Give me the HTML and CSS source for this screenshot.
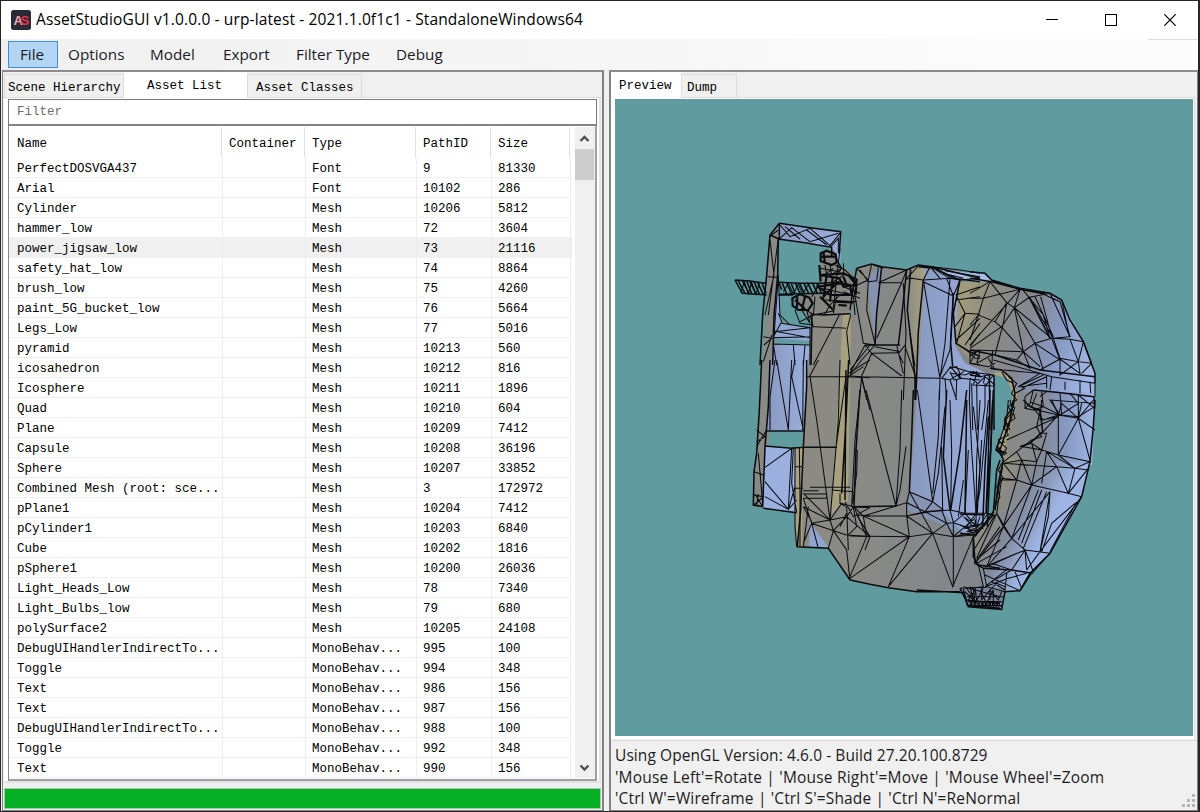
FILE: index.html
```html
<!DOCTYPE html>
<html lang="en">
<head>
<meta charset="utf-8">
<title>AssetStudioGUI</title>
<link rel="stylesheet" href="styles.css">
</head>
<body>
<div class="window">
  <header class="titlebar">
    <svg class="logo" width="20" height="20" viewBox="0 0 20 20"><rect width="20" height="20" rx="2.5" fill="#292a33"/><text class="logo-a" x="2.500" y="15">A</text><text class="logo-s" x="9.500" y="15">S</text></svg>
    <h1 class="title">AssetStudioGUI v1.0.0.0 - urp-latest - 2021.1.0f1c1 - StandaloneWindows64</h1>
    <div class="controls">
      <svg width="12" height="12" viewBox="0 0 12 12"><path d="M0 5.5H12"/></svg>
      <svg width="12" height="12" viewBox="0 0 12 12"><path d="M.5.5h11v11H.5z"/></svg>
      <svg width="12" height="12" viewBox="0 0 12 12"><path class="smooth" d="M.3.3 11.7 11.7M11.7.3.3 11.7"/></svg>
    </div>
  </header>
  <nav class="menu"><span class="item active">File</span><span class="item options">Options</span><span class="item model">Model</span><span class="item export">Export</span><span class="item filter-type">Filter Type</span><span class="item debug">Debug</span></nav>
  <main class="split">
    <section class="pane left">
      <div class="tabs"><span class="tab scene">Scene Hierarchy</span><span class="tab list on">Asset List</span><span class="tab classes">Asset Classes</span></div>
      <div class="page">
        <div class="filter">Filter</div>
        <div class="listbox">
          <div class="table">
            <div class="row head"><span>Name</span><span>Container</span><span>Type</span><span>PathID</span><span>Size</span></div>
            <div class="row"><span>PerfectDOSVGA437</span><span></span><span>Font</span><span>9</span><span>81330</span></div>
            <div class="row"><span>Arial</span><span></span><span>Font</span><span>10102</span><span>286</span></div>
            <div class="row"><span>Cylinder</span><span></span><span>Mesh</span><span>10206</span><span>5812</span></div>
            <div class="row"><span>hammer_low</span><span></span><span>Mesh</span><span>72</span><span>3604</span></div>
            <div class="row selected"><span>power_jigsaw_low</span><span></span><span>Mesh</span><span>73</span><span>21116</span></div>
            <div class="row"><span>safety_hat_low</span><span></span><span>Mesh</span><span>74</span><span>8864</span></div>
            <div class="row"><span>brush_low</span><span></span><span>Mesh</span><span>75</span><span>4260</span></div>
            <div class="row"><span>paint_5G_bucket_low</span><span></span><span>Mesh</span><span>76</span><span>5664</span></div>
            <div class="row"><span>Legs_Low</span><span></span><span>Mesh</span><span>77</span><span>5016</span></div>
            <div class="row"><span>pyramid</span><span></span><span>Mesh</span><span>10213</span><span>560</span></div>
            <div class="row"><span>icosahedron</span><span></span><span>Mesh</span><span>10212</span><span>816</span></div>
            <div class="row"><span>Icosphere</span><span></span><span>Mesh</span><span>10211</span><span>1896</span></div>
            <div class="row"><span>Quad</span><span></span><span>Mesh</span><span>10210</span><span>604</span></div>
            <div class="row"><span>Plane</span><span></span><span>Mesh</span><span>10209</span><span>7412</span></div>
            <div class="row"><span>Capsule</span><span></span><span>Mesh</span><span>10208</span><span>36196</span></div>
            <div class="row"><span>Sphere</span><span></span><span>Mesh</span><span>10207</span><span>33852</span></div>
            <div class="row"><span>Combined Mesh (root: sce...</span><span></span><span>Mesh</span><span>3</span><span>172972</span></div>
            <div class="row"><span>pPlane1</span><span></span><span>Mesh</span><span>10204</span><span>7412</span></div>
            <div class="row"><span>pCylinder1</span><span></span><span>Mesh</span><span>10203</span><span>6840</span></div>
            <div class="row"><span>Cube</span><span></span><span>Mesh</span><span>10202</span><span>1816</span></div>
            <div class="row"><span>pSphere1</span><span></span><span>Mesh</span><span>10200</span><span>26036</span></div>
            <div class="row"><span>Light_Heads_Low</span><span></span><span>Mesh</span><span>78</span><span>7340</span></div>
            <div class="row"><span>Light_Bulbs_low</span><span></span><span>Mesh</span><span>79</span><span>680</span></div>
            <div class="row"><span>polySurface2</span><span></span><span>Mesh</span><span>10205</span><span>24108</span></div>
            <div class="row"><span>DebugUIHandlerIndirectTo...</span><span></span><span>MonoBehav...</span><span>995</span><span>100</span></div>
            <div class="row"><span>Toggle</span><span></span><span>MonoBehav...</span><span>994</span><span>348</span></div>
            <div class="row"><span>Text</span><span></span><span>MonoBehav...</span><span>986</span><span>156</span></div>
            <div class="row"><span>Text</span><span></span><span>MonoBehav...</span><span>987</span><span>156</span></div>
            <div class="row"><span>DebugUIHandlerIndirectTo...</span><span></span><span>MonoBehav...</span><span>988</span><span>100</span></div>
            <div class="row"><span>Toggle</span><span></span><span>MonoBehav...</span><span>992</span><span>348</span></div>
            <div class="row"><span>Text</span><span></span><span>MonoBehav...</span><span>990</span><span>156</span></div>
          </div>
          <div class="scrollbar">
            <svg width="20" height="22" viewBox="0 0 20 22"><path d="M5.5 14 9.5 10l4 4"/></svg>
            <div class="thumb"></div>
            <svg class="down" width="20" height="21" viewBox="0 0 20 21"><path d="M5.5 8.500l4 4 4-4"/></svg>
          </div>
        </div>
      </div>
      <div class="progress"></div>
    </section>
    <section class="pane right">
      <div class="tabs"><span class="tab preview on">Preview</span><span class="tab dump">Dump</span></div>
      <div class="viewport">
        <svg class="mesh" width="578" height="637" viewBox="615 99 578 637">
          <defs>
            <linearGradient id="tan" x1="0" x2="1"><stop offset="0" stop-color="#898a86"/><stop offset="1" stop-color="#aaa37f"/></linearGradient>
            <linearGradient id="hand" gradientUnits="userSpaceOnUse" x1="955" y1="330" x2="1090" y2="370"><stop offset="0" stop-color="#a09b7d"/><stop offset=".2" stop-color="#8c8b83"/><stop offset=".48" stop-color="#858890"/><stop offset=".72" stop-color="#8799c2"/><stop offset="1" stop-color="#9fb5e4"/></linearGradient>
            <linearGradient id="low" gradientUnits="userSpaceOnUse" x1="985" y1="470" x2="1075" y2="515"><stop offset="0" stop-color="#a69f7d"/><stop offset=".3" stop-color="#888984"/><stop offset=".5" stop-color="#828b9f"/><stop offset=".8" stop-color="#9db4e4"/></linearGradient>
            <linearGradient id="mid" gradientUnits="userSpaceOnUse" x1="1005" y1="0" x2="1092" y2="0"><stop offset="0" stop-color="#8a8a83"/><stop offset=".4" stop-color="#85888f"/><stop offset=".7" stop-color="#8799c2"/><stop offset="1" stop-color="#9db3e2"/></linearGradient>
            <linearGradient id="blue" x1="0" x2="1"><stop offset="0" stop-color="#8999bf"/><stop offset="1" stop-color="#9bb0e0"/></linearGradient>
            <linearGradient id="base" gradientUnits="userSpaceOnUse" x1="830" y1="0" x2="980" y2="0"><stop offset="0" stop-color="#8b8b84"/><stop offset="1" stop-color="#82868c"/></linearGradient>
          </defs>
          <!-- shaded faces -->
          <g class="faces">
            <path fill="#898a86" d="M770 235 779 225 776 330 770 430 763 507 753 507 753 495 755 470 761 390Z"/>
            <path fill="url(#blue)" d="M778 223 841 232 840 280 832 280 832 247 778 239Z"/>
            <path fill="#91a5d3" d="M778 275 781 323 810 328 810 341 773 338Z"/>
            <path fill="url(#blue)" d="M773 343 810 345 803 432 766 431Z"/>
            <path fill="#9bb0df" d="M765 446 796 448 799 513 763 508Z"/>
            <path fill="#858780" d="M823 252 834 250 842 268 852 272 858 300 850 315 812 322 801 310 793 302 803 295 818 294Z"/>
            <path fill="url(#base)" d="M812 313 855 313 857 268 872 264 882 267 907 270 918 265 960 270 995 375 987 520 972 538 975 565 990 570 990 591 917 592 888 588 850 580 828 548 797 548 803 430Z"/>
            <path fill="#aaa281" d="M795 448 803 446 802 548 796 548Z"/>
            <path fill="#a8a17f" d="M843 314 851 314 848 500 831 514 840 370Z"/>
            <path fill="#91a4d0" d="M810 522 829 548 809 547Z"/>
            <path fill="url(#tan)" d="M906 270 918 265 926 268 917 378 907 378Z"/>
            <path fill="#8491af" d="M867 280 878 267 883 268 875 342Z"/>
            <path fill="url(#blue)" d="M925 268 961 282 955 345 965 363 994 377 991 520 965 534 910 492 918 378Z"/>
            <path fill="#a7bae5" d="M928 268 970 273 986 273 992 281 982 283 950 278Z"/>
            <path fill="#8693b3" d="M910 492 932 500 965 535 908 510Z"/>
            <path fill="url(#hand)" d="M958 282 991 281 1020 289 1050 293 1062 300 1083 342 1095 373 1095 400 1010 400 1007 377 970 360 956 345Z"/>
            <path fill="url(#low)" d="M1002 448 1092 448 1090 462 1082 497 1050 553 1030 573 1020 591 985 590 973 552 973 538 993 512 1002 460Z"/>
            <path fill="url(#mid)" d="M1013 392 1095 392 1095 400 1092 465 1000 455 1005 420Z"/>
            <path fill="#7c849b" d="M964 588 1006 588 1002 609 968 607Z"/>
            <path fill="#a9a27f" d="M990 374 1003 371 1012 380 1017 394 1015 408 1011 424 1004 450 998 454 996 449 1003 433 1006 418 1012 405 1012 392 1006 378Z"/>
            <path fill="#609c9f" d="M995 375 1007 378 1012 393 1012 407 1005 420 1003 433 997 450 1001 461 998 485 992 512 985 522 988 490 993 420Z"/>
          </g>
          <!-- frame, blade and gearing -->
          <g class="wire" transform="translate(730 215) scale(.33333)">
            <path class="thick" d="M148 25 240 38 332 50 328 115M148 25 120 60 110 180 98 300 90 450M145 72 225 83 305 97 305 125M120 60 148 72 148 28M145 72 143 180 132 300 128 450"/>
            <path d="M150 30 180 65 240 40 300 92 332 52M150 70 185 38 240 80 325 55M165 35 210 72M230 45 290 90M302 96 325 70 325 115M118 65 145 45M120 75 132 180 105 300M145 70 115 300M112 185 145 187 150 300 180 330M145 180 132 365M130 365 155 320 145 295M155 325 240 338 240 368 128 347M132 350 240 338M130 368 240 365M130 387 240 390M190 390 195 450M130 387 140 450M225 390 220 450M240 335 240 450M100 365 125 370 102 390M100 440 126 360M248 335 328 338 348 340M328 300 250 450M362 300 350 350 360 450"/>
            <path class="thick" d="M248 298 280 300 362 296M246 295 243 450M15 195 37 235 110 240M145 240 190 240M15 195 60 198 110 205M145 202 210 205 275 205 340 200M150 238 280 235"/>
            <path class="thick" d="M25 198 45 235M37 197 58 237M50 198 65 236M60 200 78 237M72 199 88 237M83 203 100 238M96 205 108 235M148 205 155 225M157 205 170 237M170 204 185 237M184 206 195 234M196 204 210 235M209 205 222 235M222 205 236 235M235 207 248 235M248 205 262 235M260 205 275 235"/>
            <path d="M33 234 43 200 55 236 65 202 78 238 88 205M160 230 175 205 190 236 205 208 218 238 235 208 250 238 265 210M330 100 310 280M340 145 342 180 310 200M315 150 335 160 300 182"/>
            <path class="heavy" d="M272 115 290 107 317 118 320 142 305 150 272 138ZM272 125 318 124M280 108 285 145M272 180 340 175 372 190 375 210 340 215 328 190ZM290 180 280 250M308 185 300 260M265 215 330 205 360 210 365 240 300 240ZM280 245 325 200M268 150 272 200M187 250 210 238 238 248 248 265 235 285 205 285 188 272ZM195 255 225 282M202 245 200 285M225 245 215 285M310 260 370 262M325 270 350 272M270 245 310 285M340 185 350 210M355 180 375 205M380 190 377 240"/>
            <path d="M195 285 210 325 250 330M215 285 240 325 230 285 250 300 210 320M240 300 250 335M255 245 250 300 310 288M320 240 310 295M283 300 300 270 330 240M370 240 375 300M320 150 345 165 365 185M270 205 245 245M270 160 330 170M340 215 390 235M280 220 360 240M280 255 380 260M310 160 275 185M318 130 335 160 325 175M285 150 290 180M300 150 305 180M340 230 390 250"/>
          </g>
          <!-- upper body -->
          <g class="wire" transform="translate(850 250) scale(.33333)">
            <path class="thick" d="M20 55 65 42 95 50 170 60 205 45 245 50 390 85M20 55 10 110 0 180M95 50 80 190 75 285M170 60 155 200 145 285M182 58 172 180 195 380 195 450M220 90 205 245 197 450M330 90 310 190 318 280 350 300 390 320M310 130 302 280 308 350M45 285 150 285M205 50 255 55 310 85 390 95"/>
            <path d="M245 50 330 60 390 70M20 55 55 90 10 110M55 90 65 42M30 60 55 95 80 92 85 53M70 45 100 55M85 98 155 98 170 60 85 98M55 92 50 180 75 280M10 110 40 280 75 285M155 98 80 265M165 88 185 85 220 90 300 85 330 90 390 85M205 48 170 85M220 90 240 50 300 85M245 55 270 85M265 60 330 90M285 62 390 80M280 70 340 85M220 90 245 240 270 385M220 95 310 138M290 85 310 138 330 90M300 85 285 280 270 385M310 138 300 300 268 385M45 285 0 370M60 285 0 360M75 285 35 330 0 375M45 285 65 310 35 378M65 310 155 378M65 310 150 308M75 290 150 305 165 285M140 285 160 370M140 300 160 340M0 378 35 380 270 385M35 380 50 450M160 100 168 250 160 450M180 250 195 350M165 290 195 375M318 135 390 110M318 150 390 140M318 135 345 190 390 193M315 230 345 190 320 280M318 270 390 205M345 285 390 220M360 290 390 250M360 305 360 340 390 345M370 310 390 300M350 300 375 325 390 325"/>
            <path d="M300 355 320 350 330 370 300 390 275 385 302 350 330 385 390 390M300 370 345 375 370 365 390 380M310 360 335 385 312 390 300 365M270 385 268 450M285 385 290 450M300 390 320 450M320 390 318 450M360 385 358 450M308 350 390 375M325 380 345 360"/>
          </g>
          <!-- handle, top half -->
          <g class="wire" transform="translate(970 260) scale(.33333)">
            <path class="thick" d="M0 35 45 40 65 60 150 85 240 100 275 120 300 180 340 245 375 340 375 370M0 55 65 65 150 88 225 102M178 112 240 235M0 270 75 285 210 330 375 350M372 410 374 445M60 325 95 330 125 355 135 400 130 440 105 475 103 510M190 390 260 397 372 410"/>
            <path d="M60 65 40 115 25 165 0 240M60 65 0 100M60 65 110 128 133 143 178 112 240 100 300 230 250 235 178 112M150 88 133 143 160 275 195 250 245 235 300 238 340 245M150 88 40 115 0 115M150 88 0 255M110 128 75 185 25 165 0 195M110 128 100 190 75 285M133 143 95 200 0 265M75 185 98 205 160 275M133 143 195 250 270 300 245 235M133 143 245 235M195 110 250 230M212 110 245 230M225 105 270 125 300 230M275 120 298 230M155 85 220 165 240 235M250 235 270 295 325 305 300 238M340 245 325 305 365 310M340 245 365 310 335 340M270 297 210 330M325 305 270 345 270 297 330 340 325 305M195 250 220 330M160 275 140 300 180 325 160 275M160 275 210 320M160 275 0 270M98 205 160 275M75 285 140 300M0 290 20 272 0 310M20 310 30 275M20 310 65 285M65 325 68 270M0 310 55 320 75 310M55 295 75 330M70 300 210 340 245 350 375 370M100 330 210 340 145 380 220 345M145 380 230 370M155 385 230 350 230 385"/>
            <path d="M375 370 375 410M285 365 285 390M330 360 330 400M360 365 362 400M245 350 240 390M190 390 165 410 165 445 190 450 220 440M190 390 180 430 165 445M200 400 185 440M210 410 230 395M215 395 220 440 270 465 325 470 374 440M220 440 180 425M270 400 275 465M325 405 325 470M270 465 240 420 372 430M270 465 325 430 300 400M325 405 374 445M215 420 210 480M190 445 220 480M135 400 165 385M115 350 140 370 125 400 140 420 115 440 125 460 105 480 120 510M95 335 110 360 130 370M115 440 130 430M0 345 20 335 30 350 55 345 70 345M0 355 25 370 45 350 75 375M0 335 70 345 45 380M20 340 10 375 70 378M45 350 40 370"/>
            <path class="thick" d="M58 345 60 510M72 345 72 510M0 345 35 350"/>
            <path d="M5 370 8 510M20 370 22 510M45 370 45 440 35 510"/>
          </g>
          <!-- foot plates -->
          <g class="wire" transform="translate(740 360) scale(.33333)">
            <path class="thick" d="M65 0 58 150 50 280 42 335 40 435 70 440M90 0 85 140 75 260 68 440M80 213 190 213M75 258 155 265 190 262 290 262M70 445 170 458M200 0 200 80 190 262 182 450 172 560 265 565 330 660M318 30 315 420M326 0 318 180 305 400"/>
            <path d="M105 0 90 110 90 210M110 0 145 210M155 0 145 210M165 0 155 50 190 210M190 0 188 210M75 322 155 265 145 448 75 365M75 410 145 448 165 380M145 448 170 420M160 262 155 370 170 458M165 262 165 500 170 560M178 262 180 400 180 560M50 210 75 230 50 245M50 260 78 213M55 280 68 430M42 335 70 345M40 405 70 410 42 435M45 402 68 440M55 402 50 438M165 320 190 320M165 385 190 385M200 50 318 50 390 53M210 50 230 180 270 480M235 0 208 50M300 0 295 180 270 480M318 50 288 262 270 480 305 430 340 440M210 382 330 382M190 392 235 392M190 402 258 402M190 415 260 415 260 400M275 390 340 395M190 400 270 480M190 415 215 490 280 512 270 480M190 440 215 485M215 490 190 550M215 490 235 565M205 440 190 560M270 480 190 440M215 490 270 480 320 470 340 440 390 443M280 512 320 470 390 530M280 512 265 565M280 512 320 525 390 530M320 440 325 570M320 460 300 500M340 440 350 500 325 525M350 465 390 530 375 570M315 425 340 470 390 443M350 465 390 468M300 400 300 430 320 440M280 512 320 570 330 660M325 40 390 0M325 50 370 20M365 50 345 240 335 440M365 55 390 150M352 270 350 340 338 430"/>
          </g>
          <!-- lower body -->
          <g class="wire" transform="translate(850 390) scale(.33333)">
            <path class="thick" d="M30 0 18 180 12 350M190 0 185 140 178 305M350 0 330 180 302 360M420 0 415 200 408 370M0 570 60 583 115 593 200 605 330 605M200 600 340 608M340 598 352 645 450 655M345 630 450 640M290 0 280 200 300 360M430 0 422 180 408 370M12 350 140 348"/>
            <path d="M48 0 138 348M155 0 150 180 138 348M168 170 150 300 138 348M202 0 225 165 248 335M268 0 265 140 248 310M285 50 265 250 248 335M275 170 278 360M300 30 305 180 302 360M358 30 365 180 378 370M355 180 345 370M395 150 382 370M415 30 390 300 378 370M340 270 325 380M12 350 40 378 170 378 240 365 300 360 345 370 408 370M40 378 138 348 170 338 178 305 248 335 225 365 170 378 170 338 225 365M178 305 248 430 290 400 225 365M178 440 40 378 50 440 12 350M170 378 178 440 248 430 310 440 370 435M0 438 178 440 0 565M170 378 248 430 115 590 178 440M50 440 0 560M248 430 308 590 370 440M310 440 310 590M275 360 290 400 310 398 300 360 345 370 310 398 310 440 290 400M310 398 345 410 375 385M310 440 345 410 370 430 400 405M248 335 280 360 225 365M345 370 380 410 390 380M345 410 410 400 380 430M350 425 400 415M345 385 370 410M310 440 380 425"/>
            <path class="thick" d="M408 370 430 375 370 440M370 440 370 500 385 525 450 535M450 145 438 180 450 190M450 210 440 240 430 370"/>
            <path d="M385 525 400 590 360 595M390 500 450 450M380 510 450 410M350 595 380 640M370 595 375 640 400 595M390 600 410 640 430 600M340 590 450 620M355 620 380 610"/>
          </g>
          <!-- handle, bottom half -->
          <g class="wire" transform="translate(960 400) scale(.33333)">
            <path class="thick" d="M405 0 400 80 390 185 365 290 270 460 210 520 180 572 135 575 125 628 25 620 15 595 0 565M40 410 45 490 70 505 155 510 220 520M100 335 45 410M115 140 130 180 115 250 105 330M25 605 125 605M30 617 125 617M160 0 150 60 120 150M190 0 210 20 240 30 248 95 210 130 180 140M115 150 140 160"/>
            <path d="M145 0 140 60 110 145 135 165M150 0 165 55 130 80 145 105 115 120 140 145M165 20 140 100M240 35 230 80 245 110 215 120 190 140M240 100 260 100 245 150 295 165 390 185 345 205 290 200 125 190M250 95 295 45 355 55 405 90M295 45 250 60M275 0 295 45 305 10 355 55 400 0M295 45 295 165 355 55 390 180M355 55 365 10M230 30 295 45M245 60 295 50 140 120M205 15 230 30M190 140 245 150 230 185 185 180 170 155 190 140M170 155 125 190M185 180 130 190 170 240 185 180 215 255 290 200 325 280 345 205M230 185 215 255 170 240 125 235M245 150 215 130 230 185M260 155 245 250M290 200 260 155 345 205 295 165M325 280 385 205M345 205 385 210M215 255 325 280 365 290M170 240 130 380M215 255 130 380M215 255 155 415 130 380M270 275 155 415M235 270 175 420M245 270 185 430M260 275 190 445M270 275 240 455M270 275 265 350 240 455M365 290 240 455M345 310 275 370 245 455M350 305 270 455M125 235 110 340 130 380M125 240 170 240M110 340 155 415 195 450 270 460M130 380 45 490M110 340 50 475M105 345 45 445M130 380 80 500 195 450 200 510M155 415 85 495M195 450 155 510 95 490M195 450 220 515 270 460M240 455 200 510M50 490 140 440M75 500 195 450M145 505 75 560M70 505 80 560 135 575M75 525 180 572 210 520M155 510 95 545 135 570 140 520M75 560 145 535 200 520M165 515 185 565 215 520M0 565 80 562M15 575 40 600 30 560M45 565 50 600M65 560 65 600M65 600 90 570 90 600M90 570 115 600 125 575M135 560 110 550 90 570M25 600 45 570M100 570 100 605M20 590 130 590"/>
            <path class="thick" d="M20 0 15 340M98 0 90 200 82 380M85 50 75 200 68 380M0 342 75 345M0 400 45 405"/>
            <path d="M40 20 60 200 48 350M60 0 50 180 48 380M10 350 55 380 20 395M45 345 15 385 60 375 80 345M0 375 50 395 45 360M115 130 135 125M110 145 125 170 140 145M130 80 150 75M125 190 115 210 130 235 110 260 120 290 105 320M128 200 105 325"/>
            <path class="heavy" d="M30 611 120 612" stroke-dasharray="8 3"/>
          </g>
        </svg>
      </div>
      <footer class="status"><p class="s1">Using OpenGL Version: 4.6.0 - Build 27.20.100.8729</p><p class="s2">'Mouse Left'=Rotate | 'Mouse Right'=Move | 'Mouse Wheel'=Zoom</p><p class="s3">'Ctrl W'=Wireframe | 'Ctrl S'=Shade | 'Ctrl N'=ReNormal</p>
        <svg class="grip" width="13" height="13" viewBox="0 0 13 13"><path d="M10 0h3v3h-3zM5 5h3v3H5zM10 5h3v3h-3zM0 10h3v3H0zM5 10h3v3H5zM10 10h3v3h-3z"/></svg>
      </footer>
    </section>
  </main>
</div>
</body>
</html>
```

FILE: styles.css
```css
* { box-sizing: border-box; }
body { margin: 0; background: #28252a; font-family: "Open Sans", "Noto Sans", sans-serif; color: #111; }
.window { width: 1199px; height: 812px; border: 1px solid #28252a; background: #f0f0f0; display: flex; flex-direction: column; overflow: hidden; }
.titlebar { height: 38px; flex: none; background: #fff; display: flex; align-items: center; padding: 0 0 1px 10px; }
.logo text { font: bold 13px "Liberation Sans", sans-serif; }
.logo-a { fill: #f3a3ad; }
.logo-s { fill: #ee2f4c; }
.title { margin: 0 0 1px 5px; font-weight: 400; font-size: 15.5px; letter-spacing: .13px; line-height: 20px; white-space: nowrap; color: #000; }
.controls { margin-left: auto; display: flex; gap: 47px; padding: 1px 22px 0 0; height: 13px; }
.controls path { fill: none; stroke: #000; stroke-width: 1; shape-rendering: crispEdges; }
.controls path.smooth { shape-rendering: auto; stroke-width: 1.2; }
.menu { height: 31px; flex: none; display: flex; align-items: center; padding-left: 7px; background: linear-gradient(#dedede, #dedede) right top / 50px 1px no-repeat, linear-gradient(90deg, #f0f0f0, #fbfbfb 85%, #fcfcfc); font-size: 15.3px; color: #1c1c28; }
.item { height: 27px; line-height: 26px; white-space: nowrap; }
.active { width: 50px; text-align: center; background: #b1d5f2; border: 1px solid #3d8fd6; line-height: 25px; padding-right: 2px; }
.options { padding-left: 10px; width: 92px; }
.model { width: 73px; }
.export { width: 73px; }
.filter-type { width: 100px; }
.split { flex: 1; min-height: 0; display: flex; gap: 5px; padding-left: 1px; }
.pane { border: 1px solid #828282; border-top: 2px solid #8c8c8c; background: #f0f0f0; display: flex; flex-direction: column; height: 741px; }
.left { width: 602px; border-right-width: 2px; padding-left: 1px; }
.right { width: 589px; border-left-width: 2px; }
.tabs, .filter, .table { font-family: "Liberation Mono", monospace; font-size: 12.5px; color: #000; }
.tabs { height: 26px; flex: none; display: flex; align-items: flex-end; border-bottom: 1px solid #dedede; }
.tab { height: 23px; border: 1px solid #dcdcdc; border-bottom: 0; background: #f0f0f0; line-height: 27px; white-space: nowrap; }
.tab.on { background: #fff; border-color: #fff; height: 26px; margin-bottom: -1px; line-height: 27px; }
.scene { width: 120px; padding-left: 3px; }
.list { width: 123px; padding-left: 22px; }
.classes { width: 115px; padding-left: 8px; }
.preview { width: 70px; padding-left: 7px; }
.dump { width: 56px; padding-left: 5px; }
.page { height: 685px; flex: none; width: 597px; background: #fff; border: 1px solid #e4e4e4; border-width: 0 2px 2px 0; padding: 1px 2px 1px 4px; }
.filter { height: 27px; border: 1px solid #7a7a7a; border-bottom-width: 2px; border-bottom-color: #848488; padding-left: 8px; line-height: 24px; color: #6d6d6d; }
.listbox { height: 655px; border: 1px solid #828790; border-top-width: 0; border-right: 2px solid #a0a0a5; border-bottom: 2px solid #a0a0a5; display: flex; padding: 1px 0 1px 0; }
.table { flex: none; width: 563px; }
.row { display: grid; grid-template-columns: 214px 83px 111px 75px 79px; height: 20px; border-bottom: 1px solid #f0f0f0; line-height: 23px; }
.row span { border-right: 1px solid #ededed; padding-left: 6px; white-space: nowrap; height: 19px; }
.row span:first-child { padding-left: 8px; }
.row.head { grid-template-columns: 213px 83px 111px 75px 79px; height: 31px; line-height: 34px; border: 0; }
.row.head span { border-color: #e2e2e2; height: 31px; }
.row.head span:nth-child(n+2) { padding-left: 7px; }
.row.selected { background: #f0f0f0; }
.scrollbar { width: 20px; margin-left: auto; background: #f0f0f0; display: flex; flex-direction: column; }
.scrollbar path { fill: none; stroke: #505050; stroke-width: 2.4; }
.thumb { height: 31px; width: 19px; background: #cdcdcd; }
.down { margin-top: auto; }
.progress { height: 21px; width: 597px; flex: none; margin: 5px 0 0; background: #06b025; border: 1px solid #a3c9a8; }
.viewport { flex: none; width: 584px; height: 641px; padding: 1px 1px 2px 4px; background: #fff; border-right: 1px solid #e2e2e2; }
.mesh { display: block; background: #609c9f; }
.wire path { fill: none; stroke: #0a0b0f; stroke-width: 3.1; }
.wire path.thick { stroke-width: 4.6; }
.wire path.heavy { stroke-width: 6.5; }
.status { position: relative; flex: 1; margin-top: 1px; border-top: 1px solid #d9d9d9; padding: 4px 0 0 4px; font-size: 15.5px; color: #1c1c22; }
.status p { margin: 0; height: 21.5px; line-height: 21.5px; white-space: nowrap; }
.s1 { letter-spacing: .08px; }
.s2 { letter-spacing: .2px; }
.s3 { letter-spacing: .15px; }
.grip { position: absolute; right: 2px; bottom: 3px; }
.grip path { fill: #b4b4b4; }
```
